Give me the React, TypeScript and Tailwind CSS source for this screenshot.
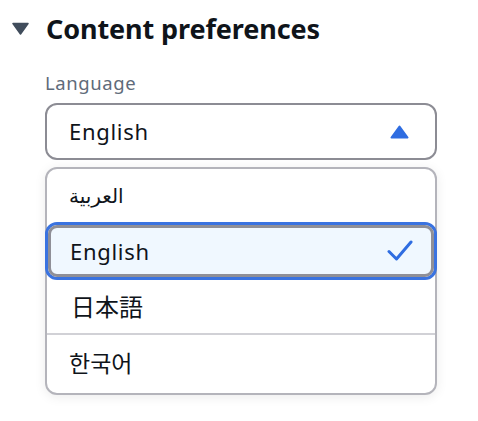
const options = [
  { label: 'العربية', lang: 'ar' },
  { label: 'English', lang: 'en', selected: true },
  { label: '日本語', lang: 'ja' },
  { label: '한국어', lang: 'ko', divider: true },
]

export default function App() {
  return (
    <div className="w-[478px] h-[421px] bg-white text-[#0f141a] font-['Noto_Sans','Noto_Sans_CJK_JP',sans-serif] overflow-hidden">
      {/* Section header */}
      <div className="flex items-center h-[32px] mt-[12px] pl-[12px]">
        <svg width="17" height="13" viewBox="0 0 17 13" className="shrink-0">
          <path d="M1 1.5 H16 L8.5 12 Z" fill="#414d5c" stroke="#414d5c" strokeWidth="1.5" strokeLinejoin="round" />
        </svg>
        <h2 className="ml-[17px] text-[27px] font-bold leading-none tracking-[-0.1px]">Content preferences</h2>
      </div>

      <div className="pl-[45px] pr-[41px]">
        <div className="mt-[27px] text-[18.5px] leading-[24px] tracking-[0.6px] text-[#5f6b7a]">Language</div>

        {/* Select trigger */}
        <div className="mt-[8px] h-[57px] border-2 border-[#8c8c94] rounded-[12px] flex items-center justify-between pl-[22px] pr-[26px]">
          <span className="text-[22px] tracking-[0.7px]">English</span>
          <svg width="19" height="14" viewBox="0 0 19 14">
            <path d="M9.5 1.5 L17.5 12.5 H1.5 Z" fill="#2f6de1" stroke="#2f6de1" strokeWidth="2" strokeLinejoin="round" />
          </svg>
        </div>

        {/* Options list */}
        <div className="mt-[7px] h-[228px] border-2 border-[#b4b4bb] rounded-[12px] bg-white shadow-[0_2px_12px_rgba(0,0,0,0.08)] w-[392px]">
          {options.map((o) =>
            o.selected ? (
              <div key={o.lang} className="-mx-[2px] h-[58px] border-[3px] border-[#3a73e0] rounded-[12px]">
                <div className="h-full border-[3px] border-[#8f8f97] rounded-[9px] bg-[#f0f8ff] flex items-center justify-between pl-[19px] pr-[18px]">
                  <span lang={o.lang} className="text-[22px] tracking-[0.7px]">{o.label}</span>
                  <svg width="26" height="24" viewBox="0 0 26 24">
                    <path d="M2 12.5 L9.5 20 L24 3" fill="none" stroke="#2f6de1" strokeWidth="3" strokeLinecap="round" strokeLinejoin="round" />
                  </svg>
                </div>
              </div>
            ) : (
              <div key={o.lang} className={o.divider ? 'border-t-2 border-[#d1d1d6]' : ''}>
                <div
                  lang={o.lang}
                  className={`flex items-center ${
                    o.lang === 'ar'
                      ? "h-[53px] pl-[22px] font-['DejaVu_Sans',sans-serif] text-[20px]"
                      : o.lang === 'ja'
                        ? 'h-[53px] pl-[24px] text-[24px]'
                        : 'h-[56px] pl-[22px] text-[23px]'
                  }`}
                >
                  {o.label}
                </div>
              </div>
            ),
          )}
        </div>
      </div>
    </div>
  )
}
